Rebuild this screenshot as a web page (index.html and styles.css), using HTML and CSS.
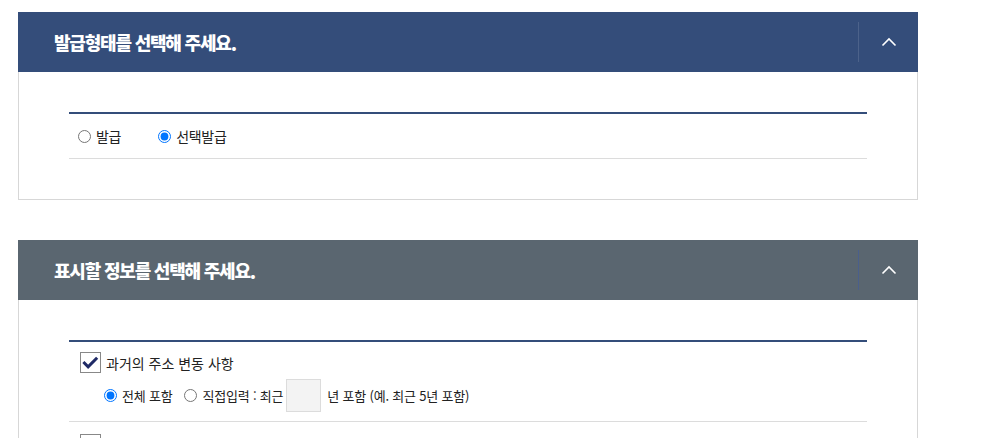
FILE: index.html
```html
<!DOCTYPE html>
<html lang="ko">
<head>
<meta charset="utf-8">
<link rel="stylesheet" href="styles.css">
</head>
<body>
<div class="page">
  <section class="panel">
    <div class="panel-head head-blue">
      <h2 class="panel-title">발급형태를 선택해 주세요.</h2>
      <button class="toggle" type="button" aria-label="접기">
        <svg width="16" height="10" viewBox="0 0 16 10"><path d="M1.5 8.5 L8 2 L14.5 8.5" fill="none" stroke="#fff" stroke-width="1.6"/></svg>
      </button>
    </div>
    <div class="panel-body body-1">
      <div class="opt-table">
        <div class="radio-row">
          <label class="radio"><input type="radio" name="type"><span>발급</span></label>
          <label class="radio radio-2"><input type="radio" name="type" checked><span>선택발급</span></label>
        </div>
      </div>
    </div>
  </section>

  <section class="panel panel-2">
    <div class="panel-head head-gray">
      <h2 class="panel-title">표시할 정보를 선택해 주세요.</h2>
      <button class="toggle toggle-blue-line" type="button" aria-label="접기">
        <svg width="16" height="10" viewBox="0 0 16 10"><path d="M1.5 8.5 L8 2 L14.5 8.5" fill="none" stroke="#fff" stroke-width="1.6"/></svg>
      </button>
    </div>
    <div class="panel-body body-2">
      <div class="opt-table">
        <div class="check-block">
          <label class="check">
            <span class="box"><svg width="20" height="20" viewBox="0 0 20 20"><path d="M2.5 9 L7.5 14 L17 4.5" fill="none" stroke="#1f2a66" stroke-width="3.2"/></svg></span>
            <span>과거의 주소 변동 사항</span>
          </label>
          <div class="sub-row">
            <label class="radio"><input type="radio" name="hist" checked><span>전체 포함</span></label>
            <label class="radio radio-sub2"><input type="radio" name="hist"><span>직접입력 : 최근</span></label>
            <input class="years" type="text">
            <span class="after">년 포함 (예. 최근 5년 포함)</span>
          </div>
        </div>
        <div class="check-block next">
          <span class="box"></span>
        </div>
      </div>
    </div>
  </section>
</div>
</body>
</html>
```

FILE: styles.css
```css
* { box-sizing: border-box; }
html, body { margin: 0; padding: 0; background: #fff; }
body {
  font-family: "Noto Sans CJK KR", "Noto Sans", sans-serif;
  color: #222;
  overflow: hidden;
}
.page {
  padding: 12px 0 0 18px;
}
.panel {
  width: 900px;
}
.panel-2 {
  margin-top: 40px;
}
.panel-head {
  height: 60px;
  display: flex;
  align-items: center;
  justify-content: space-between;
  padding-left: 36px;
}
.head-blue { background: #344d7a; }
.head-gray { background: #5a6670; }
.panel-title {
  margin: 0;
  color: #fff;
  font-size: 18px;
  font-weight: 900;
  letter-spacing: -1.2px;
  line-height: 1;
}
.toggle {
  width: 60px;
  height: 40px;
  border: 0;
  border-left: 1px solid rgba(255,255,255,0.12);
  background: transparent;
  padding: 0;
  display: flex;
  align-items: center;
  justify-content: center;
  cursor: pointer;
}
.toggle-blue-line { border-left-color: #4a5f8c; }
.toggle svg { display: block; margin-top: -1px; }
.panel-body {
  border: 1px solid #d7d7d7;
  border-top: 0;
  padding: 40px 50px 40px 50px;
}
.opt-table {
  border-top: 2px solid #344d7a;
}
.radio-row {
  height: 45px;
  display: flex;
  align-items: center;
  border-bottom: 1px solid #dcdcdc;
  padding-left: 9px;
}
.radio {
  display: inline-flex;
  align-items: center;
  font-size: 14px;
  letter-spacing: -0.3px;
  color: #222;
}
.radio input {
  margin: 0 5px 0 0;
  width: 13px;
  height: 13px;
}
.radio-2 { margin-left: 37px; }

.check-block {
  border-bottom: 1px solid #dcdcdc;
  padding: 10px 0 9px 11px;
}
.check-block.next {
  padding-top: 12px;
  border-bottom: 0;
}
.check {
  display: flex;
  align-items: center;
  height: 21px;
  font-size: 14px;
  letter-spacing: 0;
}
.box {
  width: 21px;
  height: 21px;
  border: 1px solid #888;
  background: #fff;
  margin-right: 5px;
  display: flex;
  align-items: center;
  justify-content: center;
}
.box svg { display: block; }
.sub-row {
  display: flex;
  align-items: center;
  margin-top: 6px;
  padding-left: 24px;
  height: 33px;
}
.sub-row .radio {
  font-size: 13px;
  letter-spacing: -0.2px;
}
.radio-sub2 { margin-left: 12px; }
.years {
  width: 35px;
  height: 33px;
  margin: 0 6px 0 3px;
  border: 1px solid #dcdcdc;
  background: #f3f3f3;
  padding: 0;
}
.after {
  font-size: 13px;
  letter-spacing: -0.2px;
}
```
